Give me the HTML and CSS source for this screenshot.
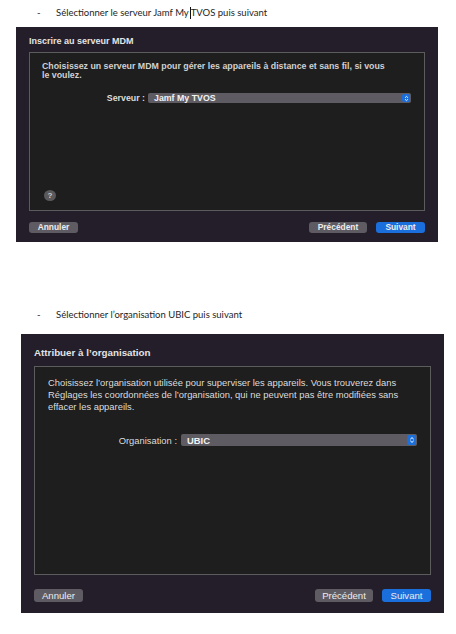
FILE: index.html
```html
<!DOCTYPE html>
<html lang="fr">
<head>
    <meta charset="UTF-8">
    <meta name="viewport" content="width=device-width, initial-scale=1.0">
    <title>Inscription MDM</title>
    <link rel="stylesheet" href="styles.css">
</head>
<body>
    <div class="page">
        <p class="step step-first"><span class="dash">-</span>Sélectionner le serveur Jamf My<span class="caret"></span>TVOS puis suivant</p>

        <div class="window window-small">
            <div class="window-title">Inscrire au serveur MDM</div>
            <div class="window-body">
                <p class="intro">Choisissez un serveur MDM pour gérer les appareils à distance et sans fil, si vous le voulez.</p>
                <div class="field">
                    <span class="field-label">Serveur :</span>
                    <div class="select">
                        <span>Jamf My TVOS</span>
                        <span class="stepper">
                            <svg viewBox="0 0 8 8" width="7" height="7"><path d="M2.3 3.2 L4 1.6 L5.7 3.2 M2.3 4.8 L4 6.4 L5.7 4.8" fill="none" stroke="#fff" stroke-width="1"/></svg>
                        </span>
                    </div>
                </div>
                <span class="help">?</span>
            </div>
            <div class="window-footer">
                <button class="btn">Annuler</button>
                <span class="spacer"></span>
                <button class="btn">Précédent</button>
                <button class="btn btn-primary">Suivant</button>
            </div>
        </div>

        <p class="step step-second"><span class="dash">-</span>Sélectionner l’organisation UBIC puis suivant</p>

        <div class="window window-large">
            <div class="window-title">Attribuer à l’organisation</div>
            <div class="window-body">
                <p class="intro">Choisissez l’organisation utilisée pour superviser les appareils. Vous trouverez dans Réglages les coordonnées de l’organisation, qui ne peuvent pas être modifiées sans effacer les appareils.</p>
                <div class="field">
                    <span class="field-label">Organisation :</span>
                    <div class="select">
                        <span>UBIC</span>
                        <span class="stepper">
                            <svg viewBox="0 0 8 8" width="8" height="8"><path d="M2.3 3.2 L4 1.6 L5.7 3.2 M2.3 4.8 L4 6.4 L5.7 4.8" fill="none" stroke="#fff" stroke-width="1"/></svg>
                        </span>
                    </div>
                </div>
            </div>
            <div class="window-footer">
                <button class="btn">Annuler</button>
                <span class="spacer"></span>
                <button class="btn">Précédent</button>
                <button class="btn btn-primary">Suivant</button>
            </div>
        </div>
    </div>
</body>
</html>
```

FILE: styles.css
```css
:root {
    --window-bg: #231e29;
    --panel-bg: #1e1e1e;
    --panel-border: #5c5c5c;
    --text: #dcdcdc;
    --button-bg: #5f5b63;
    --primary: #1b6fdc;
}

* {
    margin: 0;
    padding: 0;
    box-sizing: border-box;
}

body {
    background: #fff;
    font-family: "Liberation Sans", Arial, sans-serif;
    color: var(--text);
}

.page {
    width: 456px;
    height: 634px;
    overflow: hidden;
}

/* word document bullets */
.step {
    display: flex;
    font-family: Lato, "Liberation Sans", sans-serif;
    font-size: 9.5px;
    line-height: 14px;
    color: #1e1e1e;
    padding-left: 37px;
    white-space: nowrap;
}

.step-first {
    margin-top: 6px;
}

.step-second {
    margin-top: 66px;
}

.dash {
    width: 19px;
}

.caret {
    display: inline-block;
    width: 1px;
    height: 12px;
    margin: 1px 0 0 1px;
    background: #111;
}

/* mac window */
.window {
    background: var(--window-bg);
    display: flex;
    flex-direction: column;
    padding: 0 13px;
}

.window-title {
    font-weight: 700;
    color: #e4e4e4;
}

.window-body {
    background: var(--panel-bg);
    border: 1px solid var(--panel-border);
    display: flex;
    flex-direction: column;
}

.field {
    display: flex;
    align-items: center;
}

.field-label {
    text-align: right;
    flex-shrink: 0;
}

.select {
    display: flex;
    align-items: center;
    justify-content: space-between;
    background: var(--button-bg);
    border-radius: 2px;
    color: #f2f2f2;
    font-weight: 700;
}

.stepper {
    display: flex;
    align-items: center;
    justify-content: center;
    background: var(--primary);
    border-radius: 2px;
}

.help {
    display: flex;
    align-items: center;
    justify-content: center;
    border-radius: 50%;
    background: #5a5a5c;
    color: #cfcfcf;
    font-weight: 700;
}

.window-footer {
    display: flex;
    align-items: flex-start;
}

.spacer {
    flex: 1;
}

.btn {
    font-family: inherit;
    background: var(--button-bg);
    color: #ececec;
    border: none;
    border-radius: 3px;
    font-weight: 700;
}

.btn-primary {
    background: var(--primary);
}

/* first screenshot, smaller */
.window-small {
    width: 422px;
    height: 215px;
    margin: 7px 0 0 16px;
    font-size: 8.8px;
}

.window-small .window-title {
    padding-top: 8px;
    line-height: 12px;
    margin-bottom: 5px;
    font-size: 9px;
}

.window-small .window-body {
    height: 159px;
    padding: 9px 13px 9px 12px;
}

.window-small .intro {
    max-width: 345px;
    line-height: 9px;
    font-weight: 700;
    color: #d0d0d0;
}

.window-small .field {
    margin-top: 13px;
    height: 10px;
}

.window-small .field-label {
    width: 103px;
    margin-right: 3px;
    font-weight: 700;
}

.window-small .select {
    width: 265px;
    height: 10px;
    padding: 0 1px 0 6px;
}

.window-small .stepper {
    width: 8px;
    height: 8px;
}

.window-small .help {
    margin-top: auto;
    margin-left: 2px;
    width: 12px;
    height: 11px;
    font-size: 8px;
}

.window-small .window-footer {
    padding-top: 11px;
    gap: 9px;
}

.window-small .btn {
    height: 11px;
    font-size: 8.4px;
    line-height: 11px;
}

.window-small .btn:first-child {
    width: 49px;
}

.window-small .btn:nth-child(3) {
    width: 58px;
}

.window-small .btn-primary {
    width: 49px;
}

/* second screenshot, larger */
.window-large {
    width: 423px;
    height: 279px;
    margin: 12px 0 0 21px;
    font-size: 9.4px;
}

.window-large .window-title {
    padding-top: 12px;
    line-height: 13px;
    margin-bottom: 7px;
    font-size: 9.8px;
}

.window-large .window-body {
    height: 209px;
    padding: 10px 13px 0 13px;
}

.window-large .intro {
    max-width: 352px;
    line-height: 12px;
}

.window-large .field {
    margin-top: 21px;
    height: 12px;
}

.window-large .field-label {
    width: 129px;
    margin-right: 4px;
}

.window-large .select {
    width: 240px;
    height: 12px;
    padding: 0 1px 0 6px;
}

.window-large .stepper {
    width: 9px;
    height: 10px;
}

.window-large .window-footer {
    padding-top: 14px;
    gap: 9px;
}

.window-large .btn {
    height: 13px;
    font-size: 9.6px;
    line-height: 13px;
    font-weight: 400;
}

.window-large .btn:first-child {
    width: 49px;
}

.window-large .btn:nth-child(3) {
    width: 58px;
}

.window-large .btn-primary {
    width: 49px;
}
```
